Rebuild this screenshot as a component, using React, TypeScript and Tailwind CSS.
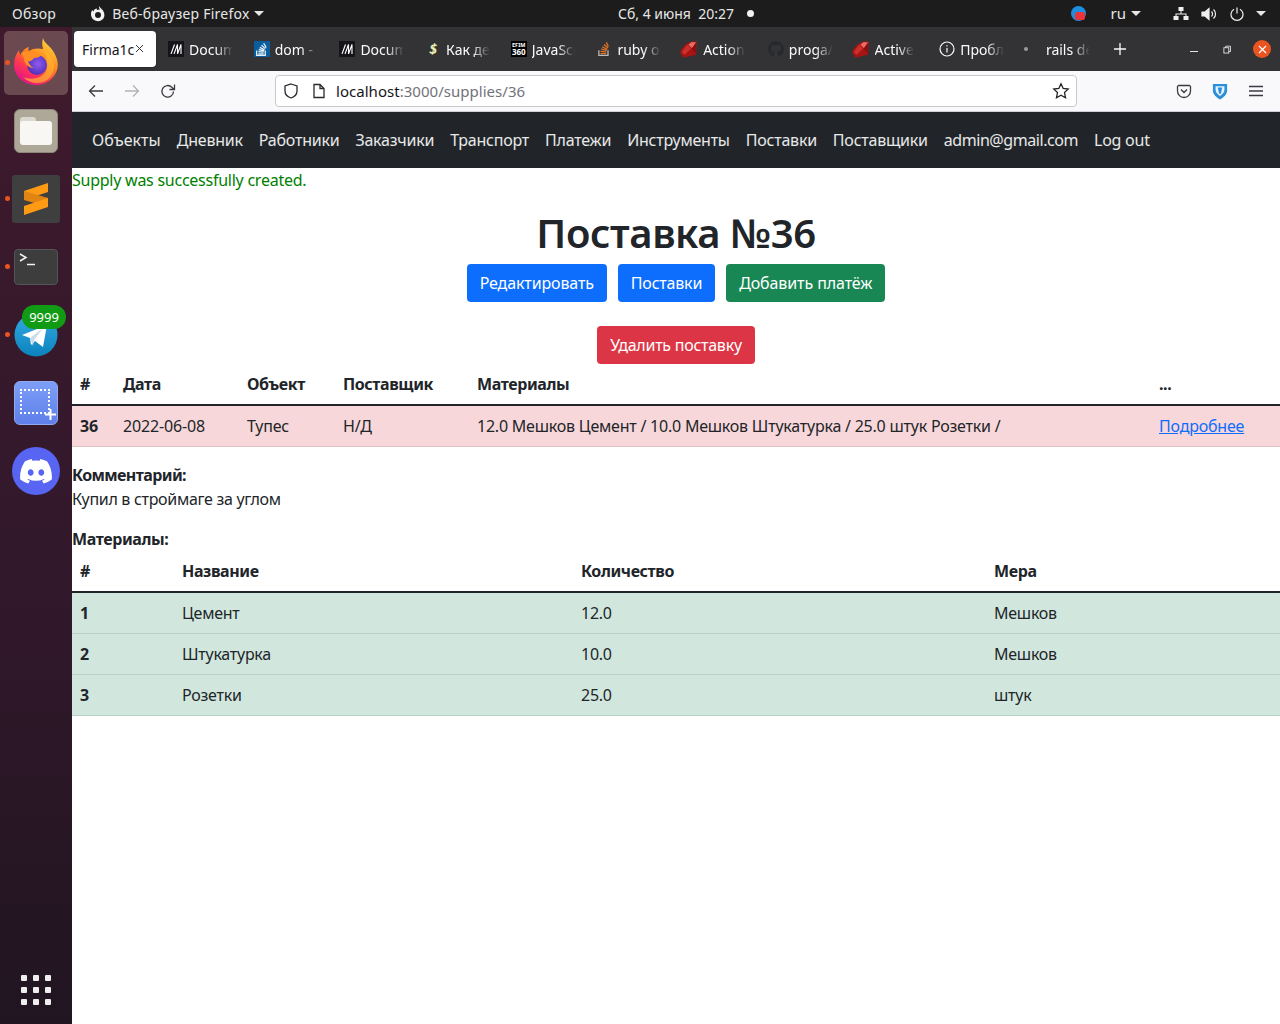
import React from "react";
import { FaGithub } from "react-icons/fa";

const F = "font-['Noto_Sans','Noto_Sans_CJK_SC',sans-serif]";

function FirefoxIcon({ size = 48 }: { size?: number }) {
  return (
    <svg width={size} height={size} viewBox="0 0 48 48" className="mt-[-2px]">
      <defs>
        <linearGradient id="ffa" x1="0.8" y1="0.05" x2="0.25" y2="0.95">
          <stop offset="0" stopColor="#ffd53a" />
          <stop offset="0.4" stopColor="#ff8a1f" />
          <stop offset="0.72" stopColor="#ff3750" />
          <stop offset="1" stopColor="#e31587" />
        </linearGradient>
        <radialGradient id="ffb" cx="0.55" cy="0.45" r="0.6">
          <stop offset="0" stopColor="#8f5cf0" />
          <stop offset="1" stopColor="#4b2bb5" />
        </radialGradient>
      </defs>
      <path d="M31 0c1 5 7 8 10 13 4 6 6 13 4 19-3 9-11 15-21 15C12 47 2 38 2 27c0-6 2-11 5-15 0 3 1 4 2 5 1-4 4-7 8-8-1 2-1 3 0 4 4-3 9-3 14-2-1-4-1-7 0-11z" fill="url(#ffa)" />
      <path d="M33 13c6 4 10 10 9 17-1 9-8 15-17 15-5 0-10-2-14-6 7 3 17 2 22-4 3-4 3-10 0-22z" fill="#ffb52e" opacity="0.7" />
      <circle cx="25" cy="27" r="10" fill="url(#ffb)" />
      <path d="M9 15c5-2 9-2 12 0 3 1 6 2 9 2-3 3-8 3-8 3-2 3-5 4-6 3 1 3 3 6 6 7-6 0-10-5-10-9 0-2-2-4-3-6z" fill="#ff8f24" />
    </svg>
  );
}

function Favicon({ k }: { k: string }) {
  if (k === "mdn")
    return (
      <span className="w-4 h-4 bg-[#15141a] flex items-center justify-center">
        <svg width="12" height="10" viewBox="0 0 12 10" fill="none" stroke="#fff" strokeWidth="1.1">
          <path d="M1 10L4.500 0.500M4 10L7.500 0.500V10M7.500 10L11 0.500V10" />
        </svg>
      </span>
    );
  if (k === "so")
    return (
      <span className="w-[16px] h-[16px] bg-[#0b5e9e] flex items-center justify-center">
        <svg width="13" height="15" viewBox="0 0 12 14" fill="none" stroke="#e8f1f8" strokeWidth="1.2">
          <path d="M1.500 8v4.500h8V8M3 11h5M3 9l5 .5M3.400 7l5 1.200M4.400 5l4.400 2.300M6 3l3.600 3.200M8 1.200l2.400 4" />
        </svg>
      </span>
    );
  if (k === "so2")
    return (
      <svg width="16" height="16" viewBox="0 0 12 14" fill="none" stroke="#e0752a" strokeWidth="1.1">
        <path d="M1.500 8v4.500h8V8" stroke="#bcbbbb" />
        <path d="M3 11h5M3 9l5 .5M3.400 7l5 1.200M4.400 5l4.400 2.300M6 3l3.600 3.200M8 1.200l1.800 3.500" />
      </svg>
    );
  if (k === "ruby")
    return (
      <svg width="17" height="17" viewBox="0 0 16 16" className="ml-[-2px] mr-[1px]">
        <path d="M11.500 0.300L15.700 0.800 15.200 13 3 15.700 0.300 11 1 8 6 2.500z" fill="#a61414" />
        <path d="M6.500 3.500l4 3.500-6 6-3-2.500z" fill="#c9302a" />
        <path d="M11 1l4.300 .3-4 5.500-3.500-3.300z" fill="#e86a60" />
        <path d="M11 7l4-5.300-.3 10z" fill="#861010" />
      </svg>
    );
  if (k === "s")
    return (
      <span className="w-4 h-4 flex items-center justify-center text-[14px] font-bold italic leading-none text-[#eeeeb0]">$</span>
    );
  if (k === "efim")
    return (
      <span className="w-4 h-4 bg-black text-white font-bold flex flex-col items-center justify-center">
        <span className="text-[5.500px] leading-[6px]">EFIM</span>
        <span className="text-[8px] leading-[8px]">360</span>
      </span>
    );
  if (k === "gh") return <FaGithub size={16} color="#26282c" />;
  if (k === "info")
    return (
      <svg width="16" height="16" viewBox="0 0 16 16" fill="none" stroke="#fbfbfe" strokeWidth="1.200">
        <circle cx="8" cy="8" r="7" />
        <path d="M8 7v4.500M8 4.200v1.300" />
      </svg>
    );
  return (
    <span className="w-4 h-4 flex items-center justify-center ml-[-7px] mr-[7px]">
      <span className="w-1 h-1 rounded-full bg-[#9a9a9c]" />
    </span>
  );
}

const tabs = [
  ["mdn", "Document"],
  ["so", "dom - How"],
  ["mdn", "Document"],
  ["s", "Как дела"],
  ["efim", "JavaScript"],
  ["so2", "ruby on"],
  ["ruby", "Action"],
  ["gh", "proga/firma"],
  ["ruby", "Active"],
  ["info", "Проблема"],
  ["dot", "rails delete"],
];

function DockItem({ children, dot, active }: { children: React.ReactNode; dot?: boolean; active?: boolean }) {
  return (
    <div className={`relative w-[64px] h-[64px] mx-auto flex items-center justify-center rounded-[5px] ${active ? "bg-[#6a4a50]" : ""}`}>
      {dot && <span className="absolute left-[1px] top-[29px] w-[5px] h-[5px] rounded-full bg-[#e95420]" />}
      {children}
    </div>
  );
}

function Dock() {
  return (
    <aside className="w-[72px] shrink-0 bg-gradient-to-b from-[#3f1a2c] via-[#33182c] to-[#211521] flex flex-col pt-[4px] pb-[2px]">
      <div className="flex flex-col gap-[4px]">
        <DockItem active dot>
          <FirefoxIcon size={48} />
        </DockItem>
        <DockItem>
          <div className="w-[44px] h-[44px] rounded-[6px] bg-[#aea898] border border-[#8d887c] flex items-center justify-center">
            <div className="relative w-[32px] h-[28px]">
              <div className="absolute left-0 top-0 w-[16px] h-[8px] rounded-t-[3px] bg-[#dbd8d0]" />
              <div className="absolute left-0 top-[4px] w-[32px] h-[24px] rounded-[3px] bg-[#f8f7f4]" />
            </div>
          </div>
        </DockItem>
        <DockItem dot>
          <div className="w-[48px] h-[48px] rounded-[3px] bg-[#3f3f3f] flex items-center justify-center">
            <svg width="24" height="32" viewBox="0 0 24 32">
              <path d="M24 0L0 8v9l24-8z" fill="#ff9a14" />
              <path d="M0 8l24 7v9L0 17z" fill="#e08512" />
              <path d="M0 23l24-8v9L0 32z" fill="#ff9a14" />
            </svg>
          </div>
        </DockItem>
        <DockItem dot>
          <div className="relative w-[44px] h-[36px] rounded-[4px] bg-[#3d3d3d] border border-[#555]">
            <svg className="absolute left-[4px] top-[3px]" width="18" height="13" viewBox="0 0 18 13" fill="none" stroke="#f2f2f2" strokeWidth="1.500">
              <path d="M1 1l6 3.500L1 8M8 11.500h8" />
            </svg>
          </div>
        </DockItem>
        <DockItem dot>
          <div className="relative w-[44px] h-[44px]">
            <svg width="44" height="44" viewBox="0 0 44 44" className="absolute left-0 top-0">
              <defs>
                <linearGradient id="tg" x1="0" y1="0" x2="0" y2="1">
                  <stop offset="0" stopColor="#34a9e3" />
                  <stop offset="1" stopColor="#0b83bd" />
                </linearGradient>
              </defs>
              <circle cx="22" cy="22" r="21.500" fill="url(#tg)" />
              <path d="M8 22l25-10-4 22-8-6-4 4-1-7z" fill="#fff" />
              <path d="M16 25l13-10-9 12-1 6z" fill="#c9dcec" />
            </svg>
            <span className="absolute left-[8px] top-[-8px] w-[44px] h-[24px] rounded-full bg-[#119a14] text-white text-[13px] leading-[24px] text-center">
              9999
            </span>
          </div>
        </DockItem>
        <DockItem>
          <div className="relative w-[44px] h-[44px] rounded-[6px] bg-gradient-to-b from-[#7d9ef7] to-[#5f7fea] border border-[#93a9ee]">
            <div className="absolute left-[5px] top-[7px] w-[30px] h-[25px] border-[2px] border-dotted border-white" />
            <svg className="absolute left-[29px] top-[26px]" width="13" height="13" viewBox="0 0 13 13" stroke="#fff" strokeWidth="2">
              <path d="M6.500 1v11M1 6.500h11" />
            </svg>
          </div>
        </DockItem>
        <DockItem>
          <div className="w-[48px] h-[48px] rounded-full bg-[#5865f2] flex items-center justify-center">
            <svg width="32" height="25" viewBox="0 0 32 25">
              <path fill="#fff" d="M27 2.200A26 26 0 0 0 20.400 0l-.8 1.700a24 24 0 0 0-7.200 0L11.600 0A26 26 0 0 0 5 2.200C.8 8.400-.3 14.400.2 20.400A26 26 0 0 0 8.300 24.500l1.700-2.800c-.9-.3-1.800-.8-2.600-1.300l.6-.5a18.700 18.700 0 0 0 16 0l.6.5c-.8.500-1.700 1-2.600 1.300l1.700 2.800a26 26 0 0 0 8.100-4.100c.6-7-1.200-13-4.800-18.200zM10.700 16.700c-1.600 0-2.900-1.500-2.900-3.200s1.300-3.200 2.900-3.200 2.900 1.500 2.900 3.200-1.300 3.200-2.900 3.200zm10.600 0c-1.600 0-2.900-1.500-2.900-3.200s1.300-3.200 2.900-3.200 2.900 1.500 2.900 3.200-1.300 3.200-2.900 3.200z" />
            </svg>
          </div>
        </DockItem>
      </div>
      <div className="mt-auto mx-auto mb-[17px] grid grid-cols-3 gap-[6px]">
        {Array.from({ length: 9 }).map((_, i) => (
          <span key={i} className="w-[6px] h-[6px] rounded-[1px] bg-[#eeeeee]" />
        ))}
      </div>
    </aside>
  );
}

function TopBar() {
  return (
    <header className="h-[27px] bg-[#1c1c1c] text-[#e6e6e6] text-[14px] flex items-center shrink-0 relative">
      <span className="ml-[12px] tracking-[0.3px]">Обзор</span>
      <svg className="ml-[34px]" width="16" height="16" viewBox="0 0 16 16">
        <path fill="#f2f2f2" d="M9 0c.5 1.500 2.500 2.500 4 4.500 2 3 1.800 6.500-.3 8.800A7 7 0 0 1 1 8c0-1.700.5-3 1.500-4 .2.800.5 1.200 1 1.500C4 3.500 5.500 2.700 7 2.600c-.3.800-.3 1.200 0 1.400C8 3.500 9 3.300 10 3.500 9.200 2.500 8.800 1.300 9 0z" />
        <circle cx="8" cy="9" r="3" fill="#1c1c1c" />
      </svg>
      <span className="ml-[6px] tracking-[0.25px]">Веб-браузер Firefox</span>
      <span className="ml-[4px] w-0 h-0 border-x-[5px] border-x-transparent border-t-[5px] border-t-[#e6e6e6]" />
      <div className="absolute left-[618px] top-0 h-full flex items-center">
        <span>Сб, 4 июня&nbsp; 20:27</span>
        <span className="ml-[13px] w-[7px] h-[7px] rounded-full bg-[#f2f2f2]" />
      </div>
      <div className="ml-auto flex items-center">
        <span className="relative w-[15px] h-[15px] rounded-full bg-[#1d8ee0]">
          <span className="absolute left-[4px] top-[6px] w-[10px] h-[8px] rounded-[2px] bg-[#e8343a]" />
        </span>
        <span className="ml-[25px] text-[15px]">ru</span>
        <span className="ml-[5px] w-0 h-0 border-x-[5px] border-x-transparent border-t-[5px] border-t-[#e6e6e6]" />
        <svg className="ml-[32px]" width="16" height="14" viewBox="0 0 16 14" fill="#f0f0f0">
          <rect x="5.500" y="0" width="5" height="4" />
          <rect x="0.500" y="9" width="5" height="4" />
          <rect x="10.500" y="9" width="5" height="4" />
          <path d="M7.500 4h1v2.500H13.500V9h-1V7.500h-9V9h-1V6.500h5z" />
        </svg>
        <svg className="ml-[12px]" width="16" height="14" viewBox="0 0 16 14" fill="none" stroke="#f0f0f0" strokeWidth="1.200">
          <path d="M1 5h3l4-3.500v11L4 9H1z" fill="#f0f0f0" />
          <path d="M10.500 4.500a3.500 3.500 0 0 1 0 5M12.500 2.500a6 6 0 0 1 0 9" />
        </svg>
        <svg className="ml-[13px]" width="14" height="14" viewBox="0 0 14 14" fill="none" stroke="#f0f0f0" strokeWidth="1.200">
          <path d="M4 2.200a6 6 0 1 0 6 0M7 0.500v6" />
        </svg>
        <span className="ml-[12px] mr-[14px] w-0 h-0 border-x-[5px] border-x-transparent border-t-[5px] border-t-[#e6e6e6]" />
      </div>
    </header>
  );
}

function TabBar() {
  return (
    <div className="h-[44px] bg-[#333336] flex items-center shrink-0 text-[14px] text-[#fbfbfe]">
      <div className="ml-[2px] w-[82px] h-[36px] bg-white rounded-[4px] text-[#15141a] flex items-center pl-[8px] shadow-sm relative">
        <span>Firma1c</span>
        <svg className="absolute right-[12px] top-[13px]" width="9" height="9" viewBox="0 0 9 9" stroke="#333" strokeWidth="1">
          <path d="M1 1l7 7M8 1l-7 7" />
        </svg>
      </div>
      <div className="flex ml-[3px]">
        {tabs.map(([k, t], i) => (
          <div key={i} className="w-[85.7px] h-[36px] flex items-center pl-[9px] pr-[12px] shrink-0 gap-[5px]">
            <span className="shrink-0 flex">
              <Favicon k={k} />
            </span>
            <span className="overflow-hidden whitespace-nowrap [mask-image:linear-gradient(to_right,black_60%,transparent)]">{t}</span>
          </div>
        ))}
      </div>
      <svg className="ml-[11px]" width="14" height="14" viewBox="0 0 14 14" stroke="#fbfbfe" strokeWidth="1.300">
        <path d="M7 1v12M1 7h12" />
      </svg>
      <div className="ml-auto flex items-center">
        <span className="w-[8px] h-[1.500px] bg-[#e6e6e6] mt-[5px]" />
        <svg className="ml-[25px]" width="8" height="9" viewBox="0 0 9 9" fill="none" stroke="#e6e6e6" strokeWidth="1">
          <rect x="1" y="2.500" width="5.500" height="6" />
          <path d="M3 2.500V.8h5.500v6H6.500" />
        </svg>
        <span className="ml-[22px] mr-[9px] w-[18px] h-[18px] rounded-full bg-[#e95420] flex items-center justify-center">
          <svg width="9" height="9" viewBox="0 0 9 9" stroke="#fff" strokeWidth="1.200">
            <path d="M1 1l7 7M8 1l-7 7" />
          </svg>
        </span>
      </div>
    </div>
  );
}

function NavBar() {
  return (
    <div className="h-[41px] bg-[#f9f9fb] border-b border-[#cfcfd8] flex items-center shrink-0 relative">
      <svg className="ml-[16px]" width="16" height="16" viewBox="0 0 16 16" fill="none" stroke="#3a3a40" strokeWidth="1.300">
        <path d="M15 8H1.500M7 2.500L1.500 8 7 13.500" />
      </svg>
      <svg className="ml-[20px]" width="16" height="16" viewBox="0 0 16 16" fill="none" stroke="#b2b2b6" strokeWidth="1.300">
        <path d="M1 8h13.500M9 2.500L14.500 8 9 13.500" />
      </svg>
      <svg className="ml-[20px]" width="16" height="16" viewBox="0 0 16 16" fill="none" stroke="#3a3a40" strokeWidth="1.300">
        <path d="M13.500 8.500a5.800 5.800 0 1 1-1.700-4.300L14 6.200M14.500 1.500v5h-5" />
      </svg>
      <div className="ml-[99px] w-[802px] h-[32px] bg-white border border-[#c8c8cc] rounded-[4px] flex items-center text-[15px]">
        <svg className="ml-[7px]" width="16" height="16" viewBox="0 0 16 16" fill="none" stroke="#2a2a2e" strokeWidth="1.300">
          <path d="M8 1l6 2v5c0 3.500-3 6-6 7-3-1-6-3.500-6-7V3z" />
        </svg>
        <svg className="ml-[13px]" width="14" height="16" viewBox="0 0 14 16" fill="none" stroke="#2a2a2e" strokeWidth="1.300">
          <path d="M2 1.500h6l4 4V14.500H2zM8 1.500v4h4" />
        </svg>
        <span className="ml-[10px] text-[#15141a] tracking-[0.03px]">
          localhost<span className="text-[#72727a]">:3000/supplies/36</span>
        </span>
        <svg className="ml-auto mr-[6px]" width="18" height="18" viewBox="0 0 18 18" fill="none" stroke="#222" strokeWidth="1.300">
          <path d="M9 1.800l2.200 4.700 5 .6-3.700 3.500 1 5.100L9 13.200l-4.500 2.500 1-5.100L1.800 7.100l5-.6z" />
        </svg>
      </div>
      <div className="ml-auto flex items-center mr-[17px]">
        <svg width="16" height="16" viewBox="0 0 16 16" fill="none" stroke="#3a3a40" strokeWidth="1.300">
          <path d="M2.500 2.500h11a1.500 1.500 0 0 1 1 1V8a6.500 6.500 0 0 1-13 0V3.500a1.500 1.500 0 0 1 1-1zM5 6.500l3 3 3-3" />
        </svg>
        <svg className="ml-[20px]" width="16" height="19" viewBox="0 0 18 20">
          <path d="M1 1.500h16V9c0 4.500-4 8-8 10-4-2-8-5.500-8-10z" fill="#2b90d9" />
          <path d="M4 4h10v4c0 3-2.500 5.500-5 7-2.500-1.500-5-4-5-7z" fill="#e8f4fc" />
          <path d="M6.500 5.500h5L10 12.500H8z" fill="#2b90d9" />
        </svg>
        <svg className="ml-[21px]" width="14" height="12" viewBox="0 0 14 12" stroke="#3a3a40" strokeWidth="1.300">
          <path d="M0 1.500h14M0 6h14M0 10.500h14" />
        </svg>
      </div>
    </div>
  );
}

const navLinks: [string, string][] = [
  ["Объекты", "tracking-[0.05px]"],
  ["Дневник", "tracking-[-0.23px]"],
  ["Работники", "tracking-[-0.23px]"],
  ["Заказчики", "tracking-[-0.23px]"],
  ["Транспорт", "tracking-[-0.23px]"],
  ["Платежи", "tracking-[-0.23px]"],
  ["Инструменты", "tracking-[-0.23px]"],
  ["Поставки", "tracking-[-0.23px]"],
  ["Поставщики", "tracking-[-0.23px]"],
  ["admin@gmail.com", "tracking-[-0.44px]"],
  ["Log out", "tracking-[-0.24px]"],
];

function SiteNav() {
  return (
    <nav className="h-[56px] bg-[#212529] flex items-center pl-[12px] text-[16px] text-white/90 shrink-0">
      {navLinks.map(([l, t]) => (
        <a key={l} className={`px-[8px] whitespace-nowrap ${t}`}>
          {l}
        </a>
      ))}
    </nav>
  );
}

function Btn({ c, children }: { c: string; children: React.ReactNode }) {
  return <a className={`inline-block h-[38px] leading-[38px] px-[13px] rounded-[4px] text-white text-[16px] ${c}`}>{children}</a>;
}

export default function App() {
  return (
    <div className={`w-[1280px] h-[1024px] overflow-hidden flex flex-col bg-white ${F}`}>
      <TopBar />
      <div className="flex flex-1 min-h-0">
        <Dock />
        <main className="flex-1 min-w-0 flex flex-col">
          <TabBar />
          <NavBar />
          <SiteNav />
          <div className="text-[16px] text-[#212529] tracking-[-0.25px] leading-[24px]">
            <p className="text-[#008000]">Supply was successfully created.</p>
            <h1 className="text-[40px] font-semibold leading-[48px] text-center mt-[17px] mb-[7px] tracking-[-0.4px]">Поставка №36</h1>
            <div className="flex justify-center gap-[11px]">
              <Btn c="bg-[#0d6efd] tracking-[-0.13px]">Редактировать</Btn>
              <Btn c="bg-[#0d6efd] tracking-[-0.2px]">Поставки</Btn>
              <Btn c="bg-[#198754] tracking-[-0.1px]">Добавить платёж</Btn>
            </div>
            <div className="flex justify-center mt-[24px]">
              <Btn c="bg-[#dc3545] tracking-[-0.25px]">Удалить поставку</Btn>
            </div>
            <table className="w-full table-fixed border-collapse">
              <colgroup>
                <col className="w-[43px]" />
                <col className="w-[124px]" />
                <col className="w-[96px]" />
                <col className="w-[134px]" />
                <col className="w-[682px]" />
                <col />
              </colgroup>
              <thead>
                <tr className="h-[41px] border-b-2 border-[#212529] text-left">
                  {["#", "Дата", "Объект", "Поставщик", "Материалы", "..."].map((h) => (
                    <th key={h} className="px-[8px] font-bold tracking-[-0.4px]">{h}</th>
                  ))}
                </tr>
              </thead>
              <tbody>
                <tr className="h-[41px] bg-[#f8d7da] border-b border-[#dfc2c4]">
                  <td className="px-[8px] font-bold">36</td>
                  <td className="px-[8px] tracking-[-0.15px]">2022-06-08</td>
                  <td className="px-[8px]">Тупес</td>
                  <td className="px-[8px]">Н/Д</td>
                  <td className="px-[8px] whitespace-nowrap tracking-[-0.22px]">12.0 Мешков Цемент / 10.0 Мешков Штукатурка / 25.0 штук Розетки /</td>
                  <td className="px-[8px] text-[#0d6efd] underline tracking-[-0.2px]">Подробнее</td>
                </tr>
              </tbody>
            </table>
            <p className="font-bold mt-[16px] tracking-[-0.6px]">Комментарий:</p>
            <p className="tracking-[-0.3px]">Купил в строймаге за углом</p>
            <p className="font-bold mt-[16px] tracking-[-0.4px]">Материалы:</p>
            <table className="w-full table-fixed border-collapse">
              <colgroup>
                <col className="w-[102px]" />
                <col className="w-[399px]" />
                <col className="w-[413px]" />
                <col />
              </colgroup>
              <thead>
                <tr className="h-[41px] border-b-2 border-[#212529] text-left">
                  {["#", "Название", "Количество", "Мера"].map((h) => (
                    <th key={h} className="px-[8px] font-bold tracking-[-0.4px]">{h}</th>
                  ))}
                </tr>
              </thead>
              <tbody>
                <tr className="h-[42px] bg-[#d1e7dd] border-b border-[#bdd0c7]">
                  <td className="px-[8px] pt-[1px] font-bold">1</td>
                  <td className="px-[8px] pt-[1px]">Цемент</td>
                  <td className="px-[8px] pt-[1px]">12.0</td>
                  <td className="px-[8px] pt-[1px]">Мешков</td>
                </tr>
                {[
                  ["2", "Штукатурка", "10.0", "Мешков"],
                  ["3", "Розетки", "25.0", "штук"],
                ].map((r) => (
                  <tr key={r[0]} className="h-[41px] bg-[#d1e7dd] border-b border-[#bdd0c7]">
                    <td className="px-[8px] font-bold">{r[0]}</td>
                    <td className="px-[8px]">{r[1]}</td>
                    <td className="px-[8px]">{r[2]}</td>
                    <td className="px-[8px]">{r[3]}</td>
                  </tr>
                ))}
              </tbody>
            </table>
          </div>
        </main>
      </div>
    </div>
  );
}
